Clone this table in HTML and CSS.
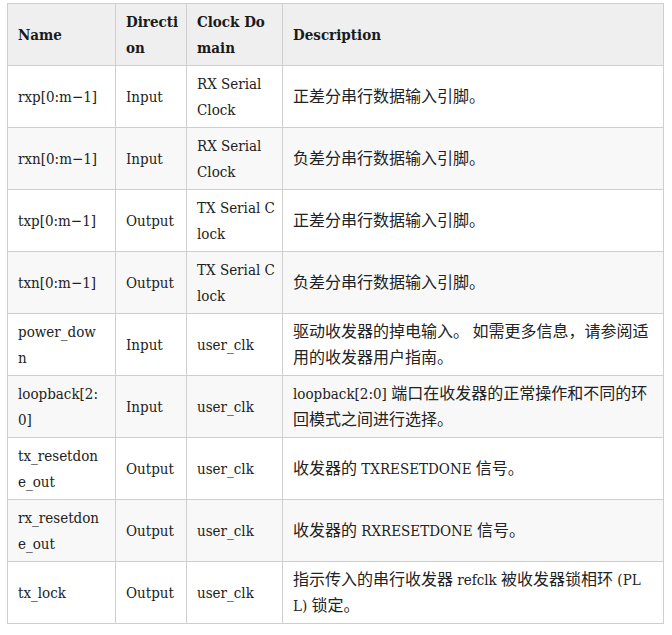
FILE: index.html
```html
<!DOCTYPE html>
<html lang="zh-CN">
<head>
<meta charset="utf-8">
<title>Ports</title>
<link rel="stylesheet" href="styles.css">
</head>
<body>
<table class="ports">
  <colgroup>
    <col class="c-name">
    <col class="c-dir">
    <col class="c-clk">
    <col class="c-desc">
  </colgroup>
  <thead>
    <tr><th>Name</th><th>Directi<wbr>on</th><th>Clock Do<wbr>main</th><th>Description</th></tr>
  </thead>
  <tbody>
    <tr><td>rxp[0:m−1]</td><td>Input</td><td>RX Serial Clock</td><td><span class="zh">正差分串行数据输入引脚。</span></td></tr>
    <tr><td>rxn[0:m−1]</td><td>Input</td><td>RX Serial Clock</td><td><span class="zh">负差分串行数据输入引脚。</span></td></tr>
    <tr><td>txp[0:m−1]</td><td>Output</td><td>TX Serial C<wbr>lock</td><td><span class="zh">正差分串行数据输入引脚。</span></td></tr>
    <tr><td>txn[0:m−1]</td><td>Output</td><td>TX Serial C<wbr>lock</td><td><span class="zh">负差分串行数据输入引脚。</span></td></tr>
    <tr><td>power_dow<wbr>n</td><td>Input</td><td>user_clk</td><td><span class="zh">驱动收发器的掉电输入。 如需更多信息，请参阅适用的收发器用户指南。</span></td></tr>
    <tr><td>loopback[2:<wbr>0]</td><td>Input</td><td>user_clk</td><td>loopback[2:0] <span class="zh">端口在收发器的正常操作和不同的环回模式之间进行选择。</span></td></tr>
    <tr><td>tx_resetdon<wbr>e_out</td><td>Output</td><td>user_clk</td><td><span class="zh">收发器的</span> TXRESETDONE <span class="zh">信号。</span></td></tr>
    <tr><td>rx_resetdon<wbr>e_out</td><td>Output</td><td>user_clk</td><td><span class="zh">收发器的</span> RXRESETDONE <span class="zh">信号。</span></td></tr>
    <tr><td>tx_lock</td><td>Output</td><td>user_clk</td><td><span class="zh">指示传入的串行收发器</span> refclk <span class="zh">被收发器锁相环</span> (PL<wbr>L) <span class="zh">锁定。</span></td></tr>
  </tbody>
</table>
</body>
</html>
```
FILE: styles.css
```css
html, body {
  background: #ffffff;
}
body {
  margin: 3px 7px;
  color: #222222;
  font-family: "DejaVu Serif Condensed", "DejaVu Serif", "Noto Sans CJK SC", serif;
  font-stretch: semi-condensed;
  font-size: 15px;
  line-height: 26px;
}
.ports {
  border-collapse: collapse;
  table-layout: fixed;
  width: 656px;
}
.c-name { width: 108px; }
.c-dir { width: 71px; }
.c-clk { width: 96px; }
.c-desc { width: 381px; }
.ports th,
.ports td {
  border: 1px solid #cfcfcf;
  padding: 5px 6px 4px 10px;
  text-align: left;
  vertical-align: middle;
  word-break: normal;
  overflow-wrap: anywhere;
}
.ports td:first-child {
  padding-right: 12px;
}
.ports td:last-child,
.ports th:last-child {
  padding-right: 10px;
}
.ports th {
  background: #efefef;
  font-weight: bold;
  color: #1a1a1a;
}
.ports tbody tr:nth-child(even) td {
  background: #f8f8f8;
}
.zh {
  font-family: "Noto Sans CJK SC", sans-serif;
  font-size: 16px;
  line-height: 1;
}
```
